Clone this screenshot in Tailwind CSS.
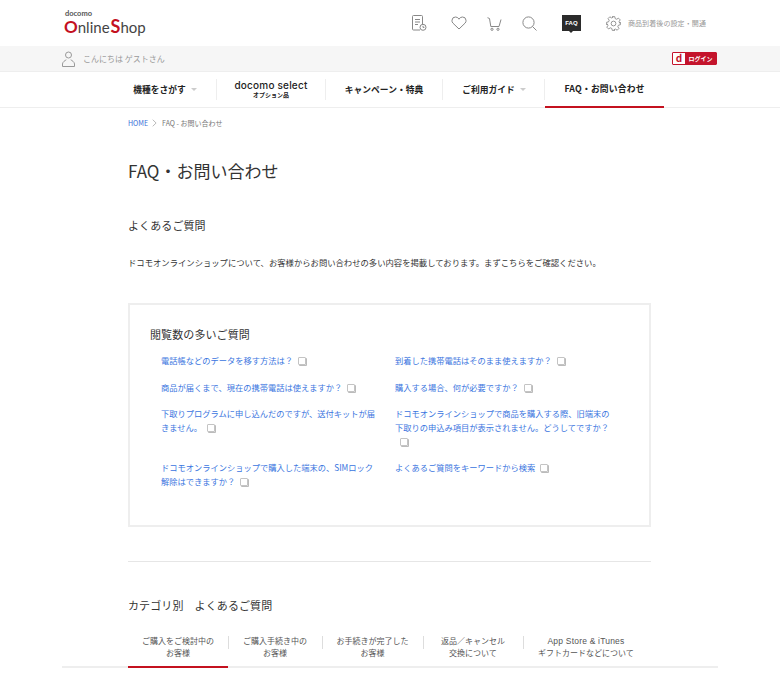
<!DOCTYPE html>
<html lang="ja">
<head>
<meta charset="utf-8">
<title>FAQ・お問い合わせ</title>
<script src="https://cdn.jsdelivr.net/npm/@tailwindcss/browser@4"></script>
</head>
<body class="bg-white text-[#333] font-['Noto_Sans_CJK_JP','Noto_Sans',sans-serif] overflow-hidden">
<div class="h-[692px] w-[780px] overflow-hidden">

  <!-- header -->
  <header class="h-[46px] pl-[64px] pr-[74px] flex items-center justify-between">
    <div class="leading-none mt-[-1px] font-['Lato',sans-serif] text-[#444]">
      <div class="text-[7.500px] font-bold pl-[1px] h-[7px] leading-[7px] text-[#555]">docomo</div>
      <div class="flex items-baseline h-[19px] leading-[19px] text-[15px] whitespace-nowrap"><span class="text-[#c4111f] text-[17px] font-bold">O</span><span>nline</span><span class="text-[#c4111f] text-[18px] font-bold ml-[1px]">S</span><span>hop</span></div>
    </div>
    <div class="flex items-center">
      <svg class="w-[15px] h-[16px] text-[#888]" viewBox="0 0 15 16" fill="none" stroke="currentColor" stroke-width="1"><path d="M8 15H1.500a1 1 0 0 1-1-1V1.500a1 1 0 0 1 1-1h8a1 1 0 0 1 1 1V9"/><path d="M3 4.500h5M3 7h5M3 9.500h3"/><circle cx="11" cy="12.300" r="3"/><path d="M11 10.800v1.600h1.400"/></svg>
      <svg class="w-[16px] h-[14px] ml-[24px] text-[#888]" viewBox="0 0 16 14" fill="none" stroke="currentColor" stroke-width="1"><path d="M8 13 1.800 7A3.600 3.600 0 0 1 1 4.200 3.500 3.500 0 0 1 4.500 1 3.800 3.800 0 0 1 8 3.200 3.800 3.800 0 0 1 11.500 1 3.500 3.500 0 0 1 15 4.200 3.600 3.600 0 0 1 14.200 7Z"/></svg>
      <svg class="w-[15px] h-[14px] ml-[20px] mt-[2px] text-[#888]" viewBox="0 0 15 14" fill="none" stroke="currentColor" stroke-width="1"><path d="M.5 .7 2.500 1.500 3.800 9.500h8.200L14 2.500"/><circle cx="5" cy="12.300" r="1.100"/><circle cx="11" cy="12.300" r="1.100"/></svg>
      <svg class="w-[15px] h-[15px] ml-[20px] text-[#888]" viewBox="0 0 15 15" fill="none" stroke="currentColor" stroke-width="1"><circle cx="6.500" cy="6.500" r="5.600"/><path d="m10.500 10.500 4 4"/></svg>
      <div class="relative w-[19px] h-[16px] ml-[25px] mt-[-1px] bg-[#2b2b2b] text-white text-[6px] font-bold leading-[16px] text-center font-['Liberation_Sans',sans-serif]">FAQ<span class="absolute left-[7px] top-[16px] w-0 h-0 border-x-[2px] border-t-[2px] border-x-transparent border-t-[#2b2b2b]"></span></div>
      <svg class="w-[15px] h-[15px] ml-[25px] text-[#888]" viewBox="0 0 24 24" fill="none" stroke="currentColor" stroke-width="1.400"><circle cx="12" cy="12" r="3.800"/><path d="M10 1h4l.7 3.200 2.400 1 2.800-1.800 2.800 2.800-1.800 2.800 1 2.400L23 10v4l-3.100.7-1 2.400 1.800 2.800-2.800 2.800-2.800-1.800-2.400 1L14 23h-4l-.7-3.100-2.400-1-2.800 1.800-2.800-2.800 1.800-2.800-1-2.400L1 14v-4l3.100-.7 1-2.400-1.800-2.800 2.800-2.800 2.800 1.800 2.400-1Z"/></svg>
      <span class="ml-[7px] text-[7px] tracking-[0.1px] text-[#999] whitespace-nowrap">商品到着後の設定・開通</span>
    </div>
  </header>

  <!-- greeting bar -->
  <div class="h-[26px] bg-[#f6f6f6] border-b border-[#eee] pl-[62px] pr-[63px] flex items-center justify-between">
    <div class="flex items-center">
      <svg class="w-[13px] h-[16px] text-[#999]" viewBox="0 0 13 16" fill="none" stroke="currentColor" stroke-width="1"><circle cx="6.500" cy="4" r="3"/><path d="M.5 15.500v-2.500c0-2 2.500-3.500 3.800-4.200M12.500 15.500v-2.500c0-2-2.500-3.500-3.800-4.200M.5 15.500h12"/></svg>
      <span class="ml-[8px] text-[8px] text-[#999]">こんにちは ゲストさん</span>
    </div>
    <div class="flex h-[13px] w-[45px] border border-[#c4142c] rounded-[1px] bg-white">
      <span class="w-[12px] text-center text-[#c4142c] text-[10px] font-bold leading-[10px]">d</span>
      <span class="flex-1 bg-[#c4142c] text-white text-[6px] font-bold leading-[11px] text-center">ログイン</span>
    </div>
  </div>

  <!-- global nav -->
  <nav class="h-[36px] border-b border-[#eee] flex pl-[107px] text-[#222] font-bold text-[8.750px]">
    <div class="w-[109px] flex items-center justify-center pl-[7px]">機種をさがす<span class="ml-[5px] w-0 h-0 border-x-[3px] border-t-[3px] border-x-transparent border-t-[#ccc]"></span></div>
    <div class="w-[110px] my-[7px] border-x border-[#eee] text-center leading-none flex flex-col items-center justify-center pb-[2px]">
      <span class="text-[10px] font-medium tracking-[0.200px] font-['Inter',sans-serif]">docomo select</span>
      <span class="text-[6px] mt-[2px]">オプション品</span>
    </div>
    <div class="w-[116px] flex items-center justify-center">キャンペーン・特典</div>
    <div class="w-[103px] my-[7px] border-x border-[#eee] flex items-center justify-center pl-[1px]">ご利用ガイド<span class="ml-[5px] w-0 h-0 border-x-[3px] border-t-[3px] border-x-transparent border-t-[#ccc]"></span></div>
    <div class="w-[119px] flex items-center justify-center border-b-2 border-[#c4111f] h-[36px] tracking-[0.200px]">FAQ・お問い合わせ</div>
  </nav>

  <main class="w-[523px] ml-[128px]">
    <div class="flex items-center h-[30px] text-[7px] text-[#777]">
      <a class="text-[#3a6fd8]">HOME</a>
      <svg class="w-[5px] h-[8px] ml-[4px] mr-[5px] text-[#aaa]" viewBox="0 0 5 8" fill="none" stroke="currentColor" stroke-width=".8"><path d="m.7.7 3.400 3.300L.7 7.300"/></svg>
      <span>FAQ - お問い合わせ</span>
    </div>

    <h1 class="mt-[21px] text-[17px] font-normal leading-[24px] text-[#333]">FAQ・お問い合わせ</h1>
    <h2 class="mt-[34px] text-[11px] leading-[16px] tracking-[0.1px] text-[#333]">よくあるご質問</h2>
    <p class="mt-[23px] text-[8.340px] leading-[12px] whitespace-nowrap text-[#333]">ドコモオンラインショップについて、お客様からお問い合わせの多い内容を掲載しております。まずこちらをご確認ください。</p>

    <!-- faq box -->
    <section class="mt-[35px] h-[224px] border-2 border-[#eee] pl-[20px] pt-[21px]">
      <h3 class="text-[11px] leading-[16px] text-[#333] font-normal tracking-[0.1px]">閲覧数の多いご質問</h3>
      <ul class="mt-[10px] ml-[11px] grid grid-cols-[234px_222px] text-[8.250px] leading-[14px] text-[#3a75e0]">
        <li class="h-[27px] pt-[1px]">電話帳などのデータを移す方法は？<i class="inline-block align-[-1px] ml-[5px] w-[8px] h-[8px] border border-[#c4c4c4] rounded-[1px] shadow-[1px_1px_0_#bbb]"></i></li>
        <li class="h-[27px] pt-[1px]">到着した携帯電話はそのまま使えますか？<i class="inline-block align-[-1px] ml-[5px] w-[8px] h-[8px] border border-[#c4c4c4] rounded-[1px] shadow-[1px_1px_0_#bbb]"></i></li>
        <li class="h-[27px] pt-[1px]">商品が届くまで、現在の携帯電話は使えますか？<i class="inline-block align-[-1px] ml-[5px] w-[8px] h-[8px] border border-[#c4c4c4] rounded-[1px] shadow-[1px_1px_0_#bbb]"></i></li>
        <li class="h-[27px] pt-[1px]">購入する場合、何が必要ですか？<i class="inline-block align-[-1px] ml-[5px] w-[8px] h-[8px] border border-[#c4c4c4] rounded-[1px] shadow-[1px_1px_0_#bbb]"></i></li>
        <li class="h-[54px] pr-[15px]">下取りプログラムに申し込んだのですが、送付キットが届きません。<i class="inline-block align-[-1px] ml-[5px] w-[8px] h-[8px] border border-[#c4c4c4] rounded-[1px] shadow-[1px_1px_0_#bbb]"></i></li>
        <li class="h-[54px] pr-[4px]">ドコモオンラインショップで商品を購入する際、旧端末の下取りの申込み項目が表示されません。どうしてですか？<i class="inline-block align-[-1px] ml-[5px] w-[8px] h-[8px] border border-[#c4c4c4] rounded-[1px] shadow-[1px_1px_0_#bbb]"></i></li>
        <li class="pr-[15px]">ドコモオンラインショップで購入した端末の、SIMロック解除はできますか？<i class="inline-block align-[-1px] ml-[5px] w-[8px] h-[8px] border border-[#c4c4c4] rounded-[1px] shadow-[1px_1px_0_#bbb]"></i></li>
        <li>よくあるご質問をキーワードから検索<i class="inline-block align-[-1px] ml-[5px] w-[8px] h-[8px] border border-[#c4c4c4] rounded-[1px] shadow-[1px_1px_0_#bbb]"></i></li>
      </ul>
    </section>

    <hr class="mt-[34px] border-[#e6e6e6]">
    <h2 class="mt-[35px] text-[11px] leading-[16px] tracking-[0.1px] text-[#333]">カテゴリ別　よくあるご質問</h2>
  </main>

  <!-- category tabs -->
  <div class="mt-[13px] mx-[62px] pl-[66px] h-[42px] border-b-2 border-[#eee] flex text-[8px] leading-[12px] text-[#555] text-center">
    <div class="w-[100px] h-[42px] border-b-2 border-[#c4111f] pt-[9px]">ご購入をご検討中の<br>お客様</div>
    <div class="w-[94px] pt-[9px] relative"><span class="absolute left-0 top-[10px] h-[13px] border-l border-[#ddd]"></span>ご購入手続き中の<br>お客様</div>
    <div class="w-[101px] pt-[9px] relative"><span class="absolute left-0 top-[10px] h-[13px] border-l border-[#ddd]"></span>お手続きが完了した<br>お客様</div>
    <div class="w-[100px] pt-[9px] relative"><span class="absolute left-0 top-[10px] h-[13px] border-l border-[#ddd]"></span>返品／キャンセル<br>交換について</div>
    <div class="w-[126px] pt-[9px] relative whitespace-nowrap"><span class="absolute left-0 top-[10px] h-[13px] border-l border-[#ddd]"></span><span class="text-[8.500px] tracking-[0.200px] font-['Liberation_Sans',sans-serif]">App Store &amp; iTunes</span><br>ギフトカードなどについて</div>
  </div>
</div>
</body>
</html>
